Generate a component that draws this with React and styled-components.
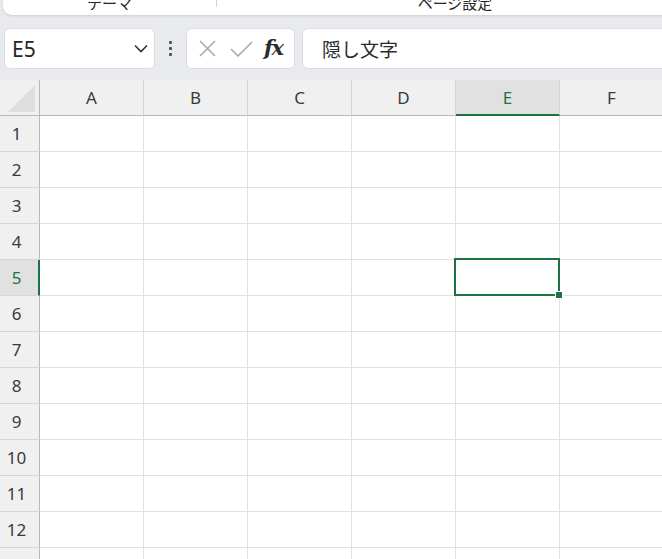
import React from "react";
import styled, { createGlobalStyle, css } from "styled-components";

const GlobalStyle = createGlobalStyle`
  html, body {
    margin: 0;
    padding: 0;
    background: #e8eaed;
    overflow: hidden;
  }
  body {
    font-family: "Noto Sans", "Noto Sans CJK JP", sans-serif;
  }
`;

const Page = styled.div`
  width: 662px;
  height: 559px;
  overflow: hidden;
  display: flex;
  flex-direction: column;
  background: #e8eaed;
`;

const Ribbon = styled.div`
  height: 15px;
  margin-left: 3px;
  width: 720px;
  flex: 0 0 auto;
  display: flex;
  background: #ffffff;
  border-radius: 0 0 0 9px;
  box-shadow: 0 1px 3px rgba(0, 0, 0, 0.12);
  overflow: hidden;
`;

const RibbonGroup = styled.div`
  width: ${(p) => p.$width}px;
  flex: 0 0 auto;
  display: flex;
  justify-content: center;
  align-items: flex-end;
  padding-bottom: 5px;
  box-sizing: border-box;
`;

const RibbonLabel = styled.span`
  font-family: "Noto Sans CJK JP", sans-serif;
  font-size: 15px;
  line-height: 15px;
  color: #262626;
`;

const RibbonDivider = styled.div`
  width: 1px;
  height: 7px;
  background: #d2d2d2;
  flex: 0 0 auto;
`;

const Toolbar = styled.div`
  margin-top: 13px;
  height: 41px;
  padding-left: 4px;
  display: flex;
  align-items: stretch;
  flex: 0 0 auto;
`;

const Box = styled.div`
  background: #ffffff;
  border: 1px solid #dcdde0;
  border-radius: 6px;
  box-sizing: border-box;
  display: flex;
  align-items: center;
  flex: 0 0 auto;
`;

const NameBox = styled(Box)`
  width: 151px;
  padding: 0 6px 0 7px;
  justify-content: space-between;
  font-size: 21px;
  color: #262626;
`;

const DotsSlot = styled.div`
  width: 31px;
  display: flex;
  flex-direction: column;
  align-items: center;
  justify-content: center;
  gap: 3px;
  flex: 0 0 auto;
`;

const Dot = styled.span`
  width: 3px;
  height: 3px;
  border-radius: 1px;
  background: #505050;
`;

const FxBox = styled(Box)`
  width: 109px;
  padding-left: 10px;
`;

const IconSlot = styled.span`
  display: flex;
  align-items: center;
  justify-content: center;
  width: ${(p) => p.$w}px;
  margin-right: ${(p) => p.$mr || 0}px;
`;

const FxText = styled.span`
  font-family: "DejaVu Serif", "Liberation Serif", serif;
  font-style: italic;
  font-weight: bold;
  font-size: 21px;
  color: #2b2b2b;
  letter-spacing: -1.5px;
  margin-top: -2px;
`;

const FormulaBox = styled(Box)`
  width: 420px;
  margin-left: 7px;
  padding-left: 19px;
  font-family: "Noto Sans CJK JP", sans-serif;
  font-size: 19px;
  color: #2b2b2b;
`;

const Sheet = styled.div`
  margin-top: 11px;
  display: grid;
  grid-template-columns: 40px repeat(6, 104px);
  grid-auto-rows: 36px;
  background: #ffffff;
  flex: 0 0 auto;
`;

const headerText = css`
  font-size: 17px;
  color: ${(p) => (p.$active ? "#1e7145" : "#3a3a3a")};
  display: flex;
  align-items: center;
  justify-content: center;
  box-sizing: border-box;
`;

const Corner = styled.div`
  background: #f0f0f0;
  border-right: 1px solid #b9b9b9;
  border-bottom: 1px solid #b9b9b9;
  box-sizing: border-box;
  display: flex;
  align-items: flex-end;
  justify-content: flex-end;
  padding: 0 4px 3px 0;
`;

const CornerTriangle = styled.div`
  width: 27px;
  height: 27px;
  background: #dedede;
  clip-path: polygon(100% 0, 100% 100%, 0 100%);
`;

const ColHeader = styled.div`
  ${headerText}
  background: ${(p) => (p.$active ? "#e1e1e1" : "#f0f0f0")};
  border-right: 1px solid #d6d6d6;
  border-bottom: ${(p) => (p.$active ? "2px solid #1e7145" : "1px solid #b9b9b9")};
  padding-top: ${(p) => (p.$active ? "1px" : "0")};
`;

const RowHeader = styled.div`
  ${headerText}
  background: ${(p) => (p.$active ? "#e1e1e1" : "#f0f0f0")};
  border-right: ${(p) => (p.$active ? "2px solid #1e7145" : "1px solid #b9b9b9")};
  border-bottom: 1px solid #d6d6d6;
  padding-right: ${(p) => (p.$active ? "5px" : "6px")};
`;

const Cell = styled.div`
  position: relative;
  border-right: 1px solid #e1e1e1;
  border-bottom: 1px solid #e1e1e1;
  box-sizing: border-box;

  ${(p) =>
    p.$selected &&
    css`
      &::after {
        content: "";
        position: absolute;
        top: -2px;
        left: -2px;
        right: -1px;
        bottom: -1px;
        border: 2px solid #1e7145;
        z-index: 2;
      }
      &::before {
        content: "";
        position: absolute;
        right: -3px;
        bottom: -3px;
        width: 6px;
        height: 6px;
        background: #1e7145;
        outline: 1px solid #ffffff;
        z-index: 3;
      }
    `}
`;

const columns = ["A", "B", "C", "D", "E", "F"];
const rows = Array.from({ length: 13 }, (_, i) => i + 1);
const selected = { col: "E", row: 5 };

function ChevronDown() {
  return (
    <svg width="14" height="9" viewBox="0 0 14 9" fill="none">
      <path d="M1 1.5 L7 7.5 L13 1.5" stroke="#333" strokeWidth="1.6" />
    </svg>
  );
}

function CancelIcon() {
  return (
    <svg width="17" height="17" viewBox="0 0 17 17" fill="none">
      <path d="M1 1 L16 16 M16 1 L1 16" stroke="#a8a8a8" strokeWidth="1.5" />
    </svg>
  );
}

function EnterIcon() {
  return (
    <svg width="23" height="16" viewBox="0 0 23 16" fill="none">
      <path d="M1 8 L8 15 L22 1" stroke="#a8a8a8" strokeWidth="1.5" />
    </svg>
  );
}

export default function App() {
  return (
    <Page>
      <GlobalStyle />
      <Ribbon>
        <RibbonGroup $width={213}>
          <RibbonLabel>テーマ</RibbonLabel>
        </RibbonGroup>
        <RibbonDivider />
        <RibbonGroup $width={476}>
          <RibbonLabel>ページ設定</RibbonLabel>
        </RibbonGroup>
      </Ribbon>

      <Toolbar>
        <NameBox>
          <span>E5</span>
          <ChevronDown />
        </NameBox>
        <DotsSlot>
          <Dot />
          <Dot />
          <Dot />
        </DotsSlot>
        <FxBox>
          <IconSlot $w={20} $mr={12}>
            <CancelIcon />
          </IconSlot>
          <IconSlot $w={24} $mr={11}>
            <EnterIcon />
          </IconSlot>
          <FxText>fx</FxText>
        </FxBox>
        <FormulaBox>隠し文字</FormulaBox>
      </Toolbar>

      <Sheet>
        <Corner>
          <CornerTriangle />
        </Corner>
        {columns.map((c) => (
          <ColHeader key={c} $active={c === selected.col}>
            {c}
          </ColHeader>
        ))}
        {rows.map((r) => (
          <React.Fragment key={r}>
            <RowHeader $active={r === selected.row}>{r}</RowHeader>
            {columns.map((c) => (
              <Cell
                key={c}
                $selected={c === selected.col && r === selected.row}
              />
            ))}
          </React.Fragment>
        ))}
      </Sheet>
    </Page>
  );
}
